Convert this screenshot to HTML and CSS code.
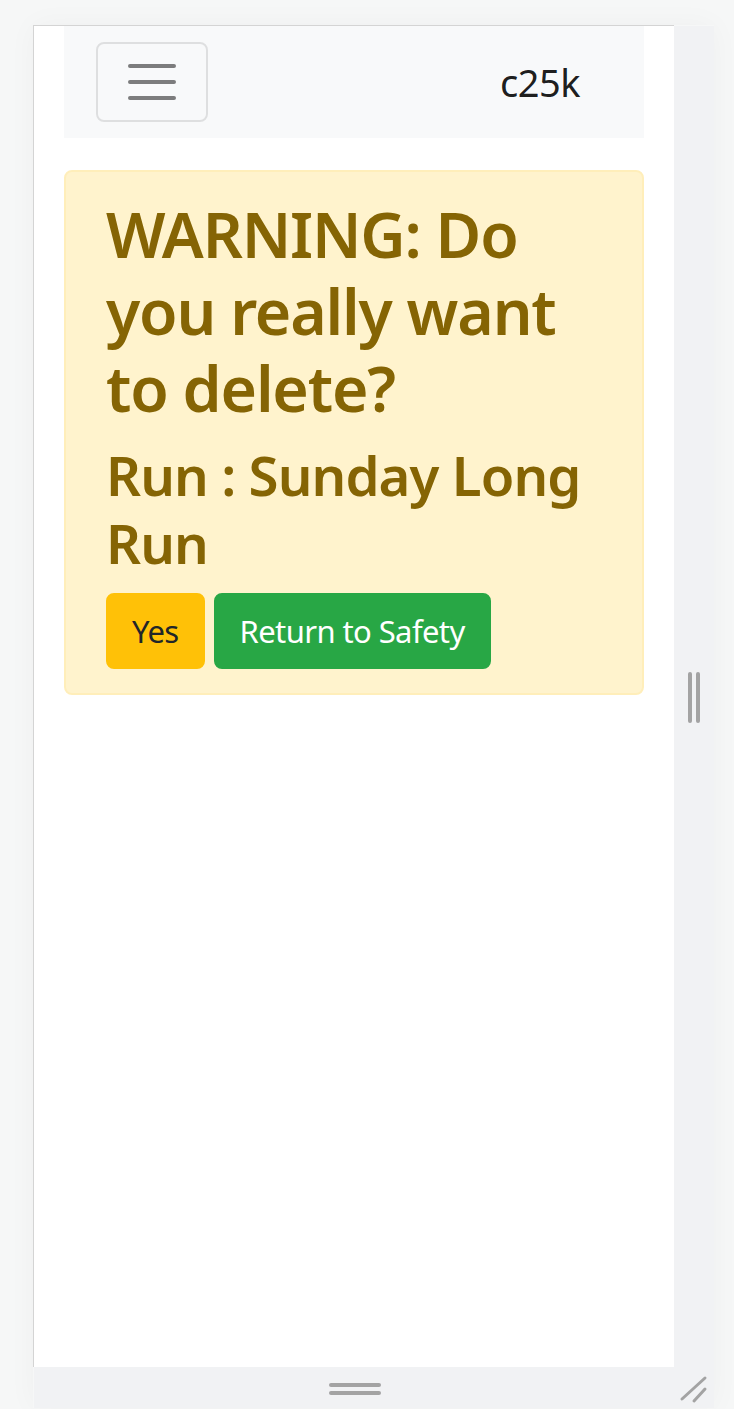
FILE: index.html
```html
<!DOCTYPE html>
<html lang="en">
<head>
<meta charset="utf-8">
<title>c25k</title>
<link rel="stylesheet" href="styles.css">
</head>
<body>
<div class="stage">
  <div class="device">
    <div class="viewport">
      <div class="container">
        <nav class="navbar">
          <button class="toggler" type="button" aria-label="Toggle navigation">
            <svg class="toggler-icon" viewBox="0 0 30 30" width="60" height="60">
              <path d="M4 7h22M4 15h22M4 23h22" stroke="rgba(0,0,0,0.5)" stroke-width="2" stroke-linecap="round" fill="none"/>
            </svg>
          </button>
          <a class="brand" href="#">c25k</a>
        </nav>
        <div class="alert">
          <h2 class="alert-title">WARNING: Do you really want to delete?</h2>
          <h3 class="alert-sub">Run : Sunday Long Run</h3>
          <div class="actions">
            <button class="btn btn-warning" type="button">Yes</button>
            <button class="btn btn-success" type="button">Return to Safety</button>
          </div>
        </div>
      </div>
    </div>
    <div class="side-bar">
      <div class="grip-v"><span></span><span></span></div>
    </div>
    <div class="bottom-bar">
      <div class="grip-h"><span></span><span></span></div>
      <svg class="corner" viewBox="0 0 30 30" width="30" height="30">
        <path d="M4 25L27 4M16 27L27 15" stroke="#a3a3a3" stroke-width="3" stroke-linecap="round" fill="none"/>
      </svg>
    </div>
  </div>
</div>
<div class="page-edge"></div>
</body>
</html>
```

FILE: styles.css
```css
* { box-sizing: border-box; }

html, body {
  margin: 0;
  padding: 0;
}

body {
  background: #f6f7f7;
  font-family: "Noto Sans", "Open Sans", sans-serif;
  width: 734px;
  height: 1409px;
  overflow: hidden;
}

.stage {
  padding: 25px 0 0 33px;
}

.device {
  display: grid;
  grid-template-columns: 641px 40px;
  grid-template-rows: 1342px 41px;
  width: 681px;
  box-shadow: 0 0 28px rgba(0, 0, 0, 0.035);
}

.viewport {
  grid-column: 1;
  grid-row: 1;
  background: #ffffff;
  border-left: 1px solid #d4d4d4;
  border-top: 1px solid #d4d4d4;
  overflow: hidden;
}

.side-bar {
  grid-column: 2;
  grid-row: 1 / span 2;
  background: #f1f2f4;
  margin-top: 1px;
  display: flex;
  align-items: flex-start;
  justify-content: center;
  padding-top: 646px;
}

.grip-v {
  display: flex;
  gap: 4px;
}

.grip-v span {
  display: block;
  width: 4px;
  height: 51px;
  border-radius: 2px;
  background: #a3a3a3;
}

.bottom-bar {
  grid-column: 1 / span 2;
  grid-row: 2;
  background: #f1f2f4;
  margin-left: 1px;
  position: relative;
  display: flex;
  justify-content: center;
  padding-top: 16px;
  padding-right: 39px;
}

.grip-h {
  display: flex;
  flex-direction: column;
  gap: 4px;
}

.grip-h span {
  display: block;
  width: 52px;
  height: 4px;
  border-radius: 2px;
  background: #a3a3a3;
}

.corner {
  position: absolute;
  right: 6px;
  top: 7px;
}

.page-edge {
  height: 2px;
  background: #c6c6c6;
  margin-top: 24px;
}

/* page content at 2x */
.container {
  padding: 0 30px;
}

.navbar {
  background: #f8f9fa;
  padding: 16px 32px;
  display: flex;
  align-items: center;
  justify-content: space-between;
}

.toggler {
  display: flex;
  padding: 8px 24px;
  background: transparent;
  border: 2px solid rgba(0, 0, 0, 0.1);
  border-radius: 8px;
  margin: 0;
}

.toggler-icon {
  display: block;
}

.brand {
  font-size: 38px;
  letter-spacing: -0.5px;
  line-height: 60px;
  padding: 10px 0;
  margin-right: 32px;
  color: rgba(0, 0, 0, 0.9);
  text-decoration: none;
}

.alert {
  margin-top: 32px;
  background: #fff3cd;
  border: 2px solid #ffeeba;
  border-radius: 8px;
  color: #856404;
  padding: 24px 40px;
}

.alert-title {
  margin: 0 0 16px;
  font-size: 62.5px;
  letter-spacing: -1.2px;
  line-height: 76.8px;
  font-weight: 600;
}

.alert-sub {
  margin: 0 0 16px;
  font-size: 54.5px;
  letter-spacing: -0.9px;
  line-height: 67.2px;
  font-weight: 600;
}

.actions {
  display: flex;
  gap: 9px;
}

.btn {
  font-family: inherit;
  font-size: 31px;
  letter-spacing: -0.6px;
  line-height: 48px;
  padding: 12px 24px;
  border: 2px solid transparent;
  border-radius: 8px;
  margin: 0;
}

.btn-warning {
  background: #ffc107;
  border-color: #ffc107;
  color: #212529;
}

.btn-success {
  background: #28a745;
  border-color: #28a745;
  color: #ffffff;
}
```
